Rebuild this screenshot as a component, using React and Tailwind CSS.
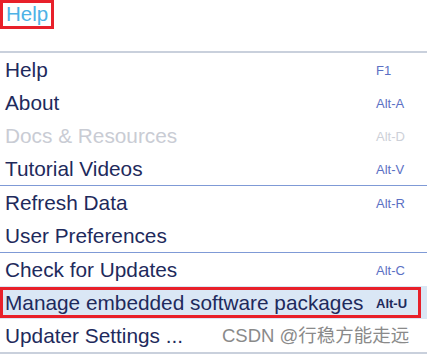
import React from "react"

const groups = [
  [
    { label: "Help", key: "F1" },
    { label: "About", key: "Alt-A" },
    { label: "Docs & Resources", key: "Alt-D", disabled: true },
    { label: "Tutorial Videos", key: "Alt-V" },
  ],
  [
    { label: "Refresh Data", key: "Alt-R" },
    { label: "User Preferences", key: "" },
  ],
  [
    { label: "Check for Updates", key: "Alt-C" },
    { label: "Manage embedded software packages", key: "Alt-U", active: true },
    { label: "Updater Settings ...", key: "", watermark: true },
  ],
]

function Row({ item }) {
  const text = item.disabled ? "text-[#c9ccd4]" : "text-[#1e2a5c]"
  const keyText = item.disabled
    ? "text-[#cdd0d8]"
    : item.active
    ? "text-[#1e2a5c] font-bold"
    : "text-[#5b70c4]"
  return (
    <div className={`relative h-[33px] flex items-center ${item.active ? "bg-[#dae7f5]" : ""}`}>
      {item.active && (
        <div className="absolute left-0 top-[1px] w-[421px] h-[31px] border-[3px] border-[#e8202a]" />
      )}
      <span className={`flex-1 pl-[5px] pt-[2px] text-[20.8px] leading-none whitespace-nowrap ${text}`}>
        {item.label}
      </span>
      {item.watermark ? (
        <span className="w-[205px] shrink-0 text-[18.5px] leading-none pt-[2px] text-[#8a8a8a] font-['Liberation_Sans','Noto_Sans_CJK_SC',sans-serif] whitespace-nowrap">
          CSDN @行稳方能走远
        </span>
      ) : (
        <span className={`w-[51px] shrink-0 text-[13px] leading-none pt-[2px] ${keyText}`}>{item.key}</span>
      )}
    </div>
  )
}

export default function App() {
  return (
    <div className="w-[427px] h-[357px] bg-white overflow-hidden font-['Liberation_Sans',Arial,sans-serif]">
      <div className="h-[51px]">
        <div className="inline-flex items-center h-[29px] px-[3px] border-[3px] border-[#e8202a]">
          <span className="text-[20.5px] leading-none text-[#4db2e6]">Help</span>
        </div>
      </div>
      <div className="h-[2px] bg-[#c9d0dc]" />
      {groups.map((g, gi) => (
        <div key={gi}>
          {gi > 0 && <div className="h-[1px] bg-[#7f9ad6]" />}
          {g.map((item) => (
            <Row key={item.label} item={item} />
          ))}
        </div>
      ))}
      <div className="h-[2px] bg-[#c9d0dc]" />
    </div>
  )
}
